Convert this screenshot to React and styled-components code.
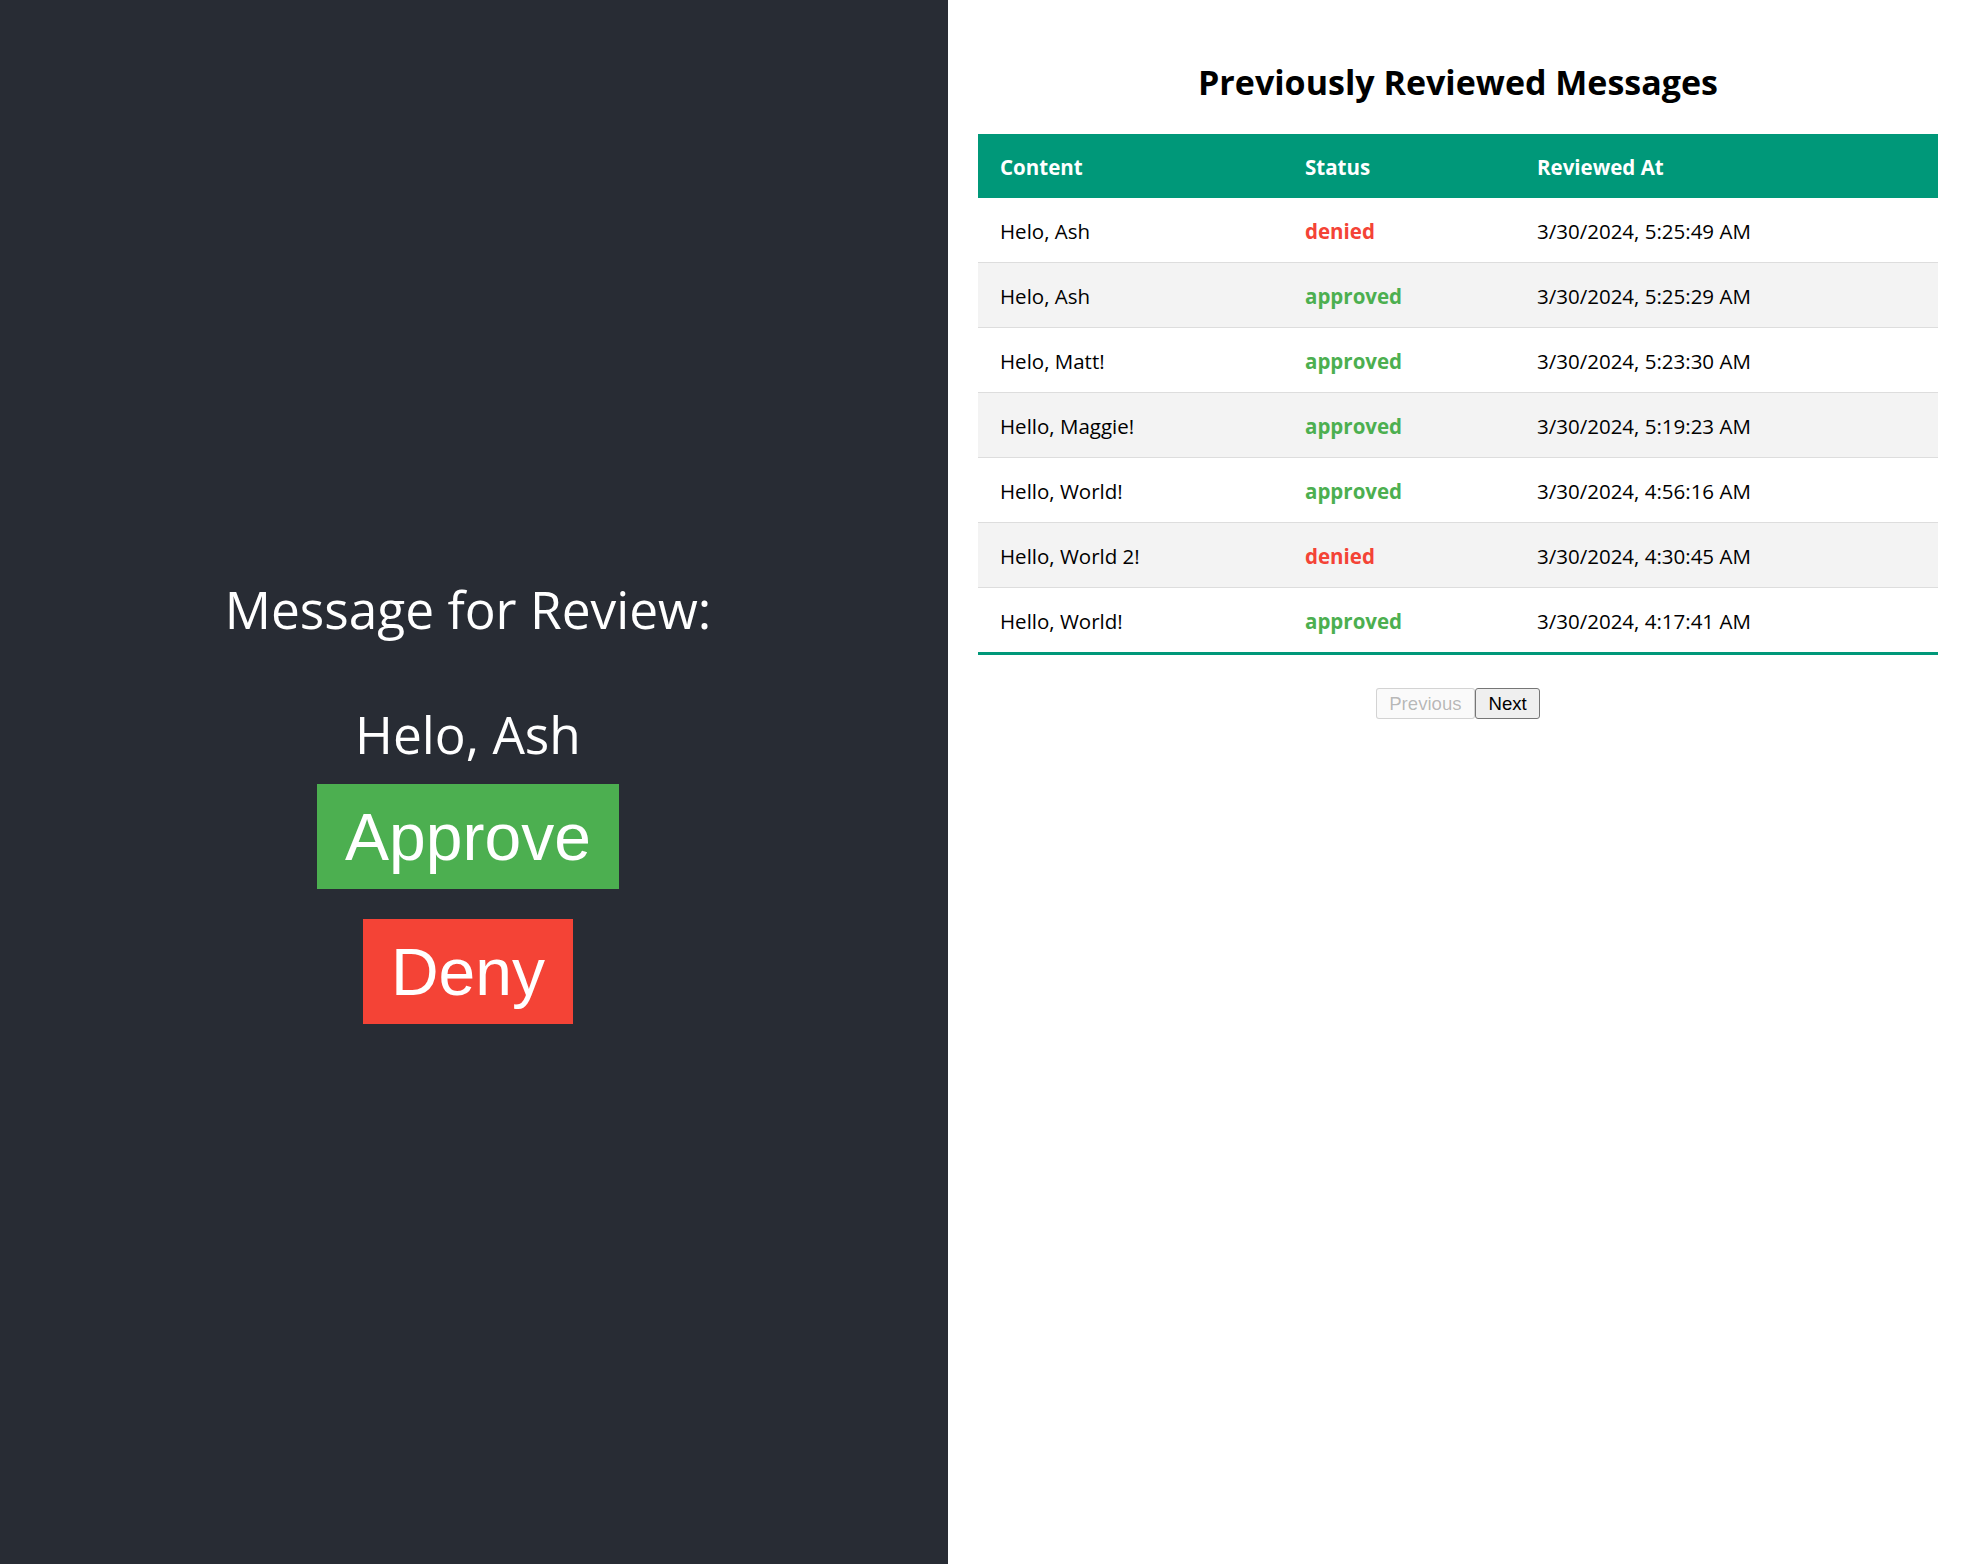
import React from "react";
import styled, { createGlobalStyle } from "styled-components";

const Global = createGlobalStyle`
  html, body { margin: 0; padding: 0; }
  body { font-family: "Open Sans", "Noto Sans", sans-serif; background: #fff; }
  #root { min-height: 100vh; }
`;

const Layout = styled.div`
  display: flex;
  min-height: 100vh;
`;

const ReviewPanel = styled.section`
  width: 948px;
  flex: none;
  box-sizing: border-box;
  background: #282c34;
  color: #fff;
  display: flex;
  flex-direction: column;
  align-items: center;
  justify-content: center;
  padding: 37px 12px 0 0;
`;

const ReviewHeading = styled.h2`
  margin: 0;
  font-size: 51.4px;
  font-weight: 400;
  line-height: 64px;
`;

const MessageText = styled.p`
  margin: 61px 0 0;
  font-size: 51.4px;
  font-weight: 400;
  line-height: 64px;
`;

const ActionButton = styled.button`
  margin-top: ${(p) => p.$gap}px;
  background: ${(p) => p.$color};
  color: #fff;
  border: none;
  font-family: "Liberation Sans", Arial, sans-serif;
  font-size: 66px;
  line-height: 76px;
  padding: 14.5px 28px;
  cursor: pointer;
`;

const HistoryPanel = styled.section`
  flex: 1;
  box-sizing: border-box;
  padding: 60px 24px 0 30px;
  display: flex;
  flex-direction: column;
  align-items: stretch;
`;

const HistoryTitle = styled.h2`
  margin: 0 0 30px;
  text-align: center;
  font-size: 34px;
  line-height: 44px;
  font-weight: 700;
  color: #000;
`;

const Table = styled.table`
  width: 960px;
  table-layout: fixed;
  border-collapse: collapse;
  font-size: 20.5px;
  line-height: 24px;
  color: #000;
`;

const HeadRow = styled.tr`
  background: #009879;
  color: #fff;
  text-align: left;
`;

const HeadCell = styled.th`
  box-sizing: border-box;
  padding: 21px 22px 19px;
  font-weight: 700;
  text-align: left;
  width: ${(p) => p.$w}px;
`;

const BodyRow = styled.tr`
  border-bottom: 1px solid #dddddd;
  &:nth-of-type(even) { background: #f3f3f3; }
  &:last-of-type { border-bottom: 3px solid #009879; }
`;

const Cell = styled.td`
  padding: 21px 22px 19px;
  white-space: nowrap;
`;

const StatusCell = styled(Cell)`
  font-weight: 700;
  color: ${(p) => (p.$status === "approved" ? "#4caf50" : "#f44336")};
`;

const Pager = styled.div`
  display: flex;
  justify-content: center;
  margin-top: 33px;
`;

const PageButton = styled.button`
  box-sizing: border-box;
  height: 31px;
  padding: 0 12.5px;
  font-family: "Liberation Sans", Arial, sans-serif;
  font-size: 18.6px;
  border-radius: 3px;
  border: 1px solid ${(p) => (p.disabled ? "rgba(118,118,118,0.3)" : "#767676")};
  background: ${(p) => (p.disabled ? "rgba(239,239,239,0.3)" : "#efefef")};
  color: ${(p) => (p.disabled ? "rgba(16,16,16,0.3)" : "#000")};
`;

const rows = [
  ["Helo, Ash", "denied", "3/30/2024, 5:25:49 AM"],
  ["Helo, Ash", "approved", "3/30/2024, 5:25:29 AM"],
  ["Helo, Matt!", "approved", "3/30/2024, 5:23:30 AM"],
  ["Hello, Maggie!", "approved", "3/30/2024, 5:19:23 AM"],
  ["Hello, World!", "approved", "3/30/2024, 4:56:16 AM"],
  ["Hello, World 2!", "denied", "3/30/2024, 4:30:45 AM"],
  ["Hello, World!", "approved", "3/30/2024, 4:17:41 AM"],
];

export default function App() {
  return (
    <>
      <Global />
      <Layout>
        <ReviewPanel>
          <ReviewHeading>Message for Review:</ReviewHeading>
          <MessageText>Helo, Ash</MessageText>
          <ActionButton $color="#4caf50" $gap={18}>Approve</ActionButton>
          <ActionButton $color="#f44336" $gap={30}>Deny</ActionButton>
        </ReviewPanel>
        <HistoryPanel>
          <HistoryTitle>Previously Reviewed Messages</HistoryTitle>
          <Table>
            <thead>
              <HeadRow>
                <HeadCell $w={305}>Content</HeadCell>
                <HeadCell $w={232}>Status</HeadCell>
                <HeadCell $w={423}>Reviewed At</HeadCell>
              </HeadRow>
            </thead>
            <tbody>
              {rows.map(([content, status, at], i) => (
                <BodyRow key={i}>
                  <Cell>{content}</Cell>
                  <StatusCell $status={status}>{status}</StatusCell>
                  <Cell>{at}</Cell>
                </BodyRow>
              ))}
            </tbody>
          </Table>
          <Pager>
            <PageButton disabled>Previous</PageButton>
            <PageButton>Next</PageButton>
          </Pager>
        </HistoryPanel>
      </Layout>
    </>
  );
}
